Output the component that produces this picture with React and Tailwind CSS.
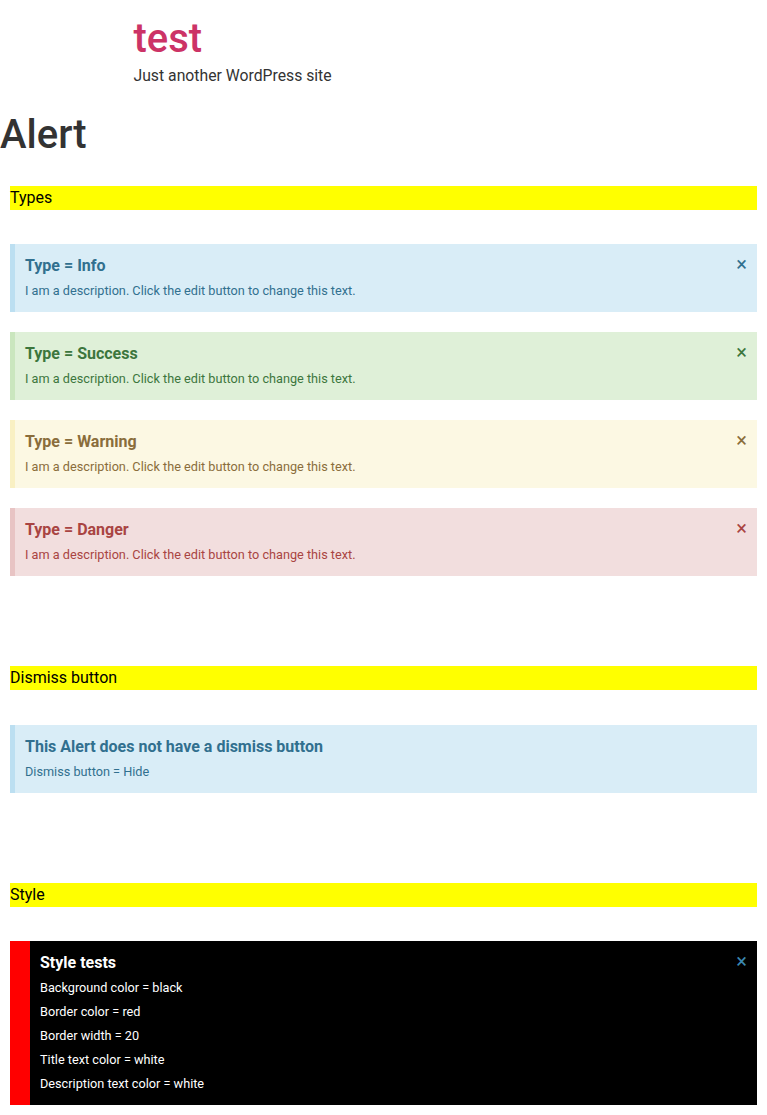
const alerts = [
  { title: 'Type = Info', bg: 'bg-[#d9edf7]', border: 'border-[#bcdff1]', text: 'text-[#31708f]' },
  { title: 'Type = Success', bg: 'bg-[#dff0d8]', border: 'border-[#cae6be]', text: 'text-[#3c763d]' },
  { title: 'Type = Warning', bg: 'bg-[#fcf8e3]', border: 'border-[#f9f0c3]', text: 'text-[#8a6d3b]' },
  { title: 'Type = Danger', bg: 'bg-[#f2dede]', border: 'border-[#e8c4c4]', text: 'text-[#a94442]' },
]

function SectionBar({ children, className = '' }) {
  return (
    <div className={`bg-[#ffff00] h-[24px] leading-[24px] text-[16px] text-black ${className}`}>{children}</div>
  )
}

function Dismiss({ className = '' }) {
  return (
    <span className={`absolute top-[10px] right-[10px] text-[20px] leading-[20px] ${className}`}>×</span>
  )
}

function Alert({ title, bg, border, text, dismiss = true, children }) {
  return (
    <div className={`relative border-l-[5px] ${bg} ${border} ${text} pl-[10px] pr-[40px] pt-[10px] pb-[9px]`}>
      <div className="text-[16px] leading-[24px] font-bold">{title}</div>
      <div className="mt-[1px] text-[12.7px] leading-[24px]">{children}</div>
      {dismiss && <Dismiss />}
    </div>
  )
}

export default function App() {
  return (
    <div className="bg-white text-[#333] font-['Roboto',sans-serif] pb-[10px]">
      <header className="max-w-[500px] mx-auto pt-[15px] pb-[16px]">
        <div className="text-[40px] leading-[48px] font-medium text-[#cc3366]">test</div>
        <p className="pt-[1px] -mb-[1px] text-[15.75px] leading-[24px] text-[#333]">Just another WordPress site</p>
      </header>

      <h1 className="mt-[8px] text-[40px] leading-[48px] font-medium text-[#333]">Alert</h1>

      <div className="px-[10px]">
        <SectionBar className="mt-[27px]">Types</SectionBar>
        <div className="mt-[34px] flex flex-col gap-[20px]">
          {alerts.map((a) => (
            <Alert key={a.title} {...a}>
              I am a description. Click the edit button to change this text.
            </Alert>
          ))}
        </div>

        <SectionBar className="mt-[90px]">Dismiss button</SectionBar>
        <div className="mt-[35px]">
          <Alert {...alerts[0]} title="This Alert does not have a dismiss button" dismiss={false}>
            Dismiss button = Hide
          </Alert>
        </div>

        <SectionBar className="mt-[90px]">Style</SectionBar>
        <div className="mt-[34px] relative bg-black border-l-[20px] border-[#ff0000] text-white pl-[10px] pr-[40px] pt-[10px] pb-[9px]">
          <div className="text-[16px] leading-[24px] font-bold">Style tests</div>
          <div className="mt-[1px] text-[12.7px] leading-[24px]">
            <div>Background color = black</div>
            <div>Border color = red</div>
            <div>Border width = 20</div>
            <div>Title text color = white</div>
            <div>Description text color = white</div>
          </div>
          <Dismiss className="text-[#3b88b0]" />
        </div>
      </div>
    </div>
  )
}
